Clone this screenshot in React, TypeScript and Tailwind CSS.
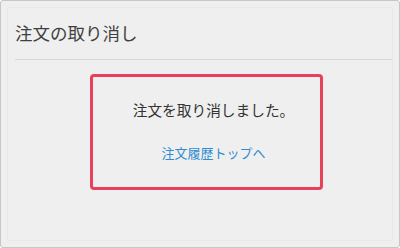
export default function App() {
  return (
    <div className="w-[400px] h-[248px] bg-white">
      <div
        className="w-full h-full rounded-[3px] border border-[#c6c6c6] bg-[#efefef] p-[6px]"
        style={{ fontFamily: '"Noto Sans CJK JP", "Noto Sans", sans-serif' }}
      >
        <div className="h-full border border-[#e8e8e8] rounded-[2px] pl-[7px]">
          {/* Header */}
          <h1 className="h-[51px] pt-[12px] text-[17.5px] leading-[26px] text-[#3f3f3f]">
            注文の取り消し
          </h1>
          <div className="h-px bg-[#d6d6d6]" />

          {/* Result box */}
          <div className="pt-[14px] pl-[5px] flex justify-center">
            <div className="w-[233px] h-[116px] border-[3px] border-[#e6435a] rounded-[4px] pl-[15px] flex flex-col items-center">
              <p className="mt-[23px] text-[14.7px] leading-[20px] text-[#333]">
                注文を取り消しました。
              </p>
              <a href="#" className="mt-[24px] text-[13px] leading-[18px] text-[#2f8dd0]">
                注文履歴トップへ
              </a>
            </div>
          </div>
        </div>
      </div>
    </div>
  )
}
